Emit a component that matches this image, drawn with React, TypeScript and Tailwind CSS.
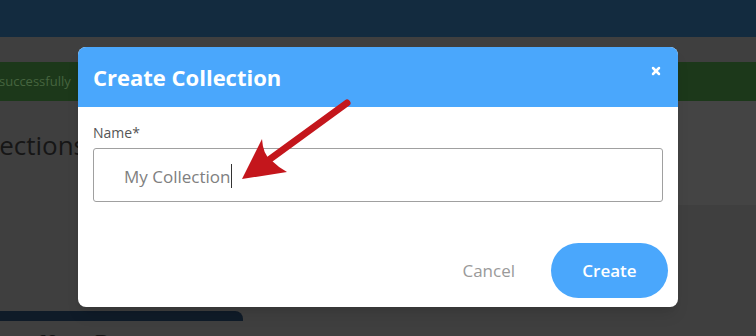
import { X } from "lucide-react"

export default function App() {
  return (
    <div className="relative h-[336px] w-[756px] overflow-hidden bg-[#3f3f3f] font-['Open_Sans',sans-serif]">
      {/* page behind the overlay */}
      <div className="h-[37px] bg-[#132b3f]" />
      <div className="mt-[25px] flex h-[39px] items-center bg-[#1c381a] text-[13px] text-[#46653f]">
        <span className="ml-[-1px]">successfully</span>
      </div>
      <div className="flex">
        <div className="flex-1">
          <h2 className="ml-[-46px] mt-[26px] text-[26px] leading-[36px] text-[#161616]">Collections</h2>
        </div>
        <div className="h-[104px] w-[78px] bg-[#444444]" />
      </div>
      <div className="mt-[106px] h-[10px] w-[243px] rounded-tr-[8px] bg-[#0f1b28]" />
      <div className="ml-[38px] mt-[7px] font-['Liberation_Serif',serif] text-[24px] italic leading-[28px] text-[#141414]">
        Nora Brown
      </div>

      {/* modal */}
      <div className="absolute left-[78px] top-[47px] flex h-[260px] w-[600px] flex-col overflow-hidden rounded-[8px] bg-white shadow-lg">
        <div className="flex h-[60px] items-center justify-between bg-[#4aa7fc] pl-[15px] pr-[16px]">
          <h1 className="text-[22px] font-bold leading-none text-white">Create Collection</h1>
          <X className="mt-[-12px] h-[12px] w-[12px] text-white" strokeWidth={5} />
        </div>
        <div className="px-[15px] pt-[16px]">
          <label className="block text-[14px] leading-[20px] text-[#555555]">Name*</label>
          <div className="mt-[5px] flex h-[54px] items-center rounded-[3px] border border-[#a0a0a0] pl-[30px] pt-[2px] text-[17px] leading-[23px] text-[#808080]">
            <span>My Collection</span>
            <span className="ml-[1px] inline-block h-[24px] w-px bg-[#333333]" />
          </div>
        </div>
        <div className="mt-auto flex items-center justify-end pb-[9px] pr-[10px]">
          <button className="mr-[36px] text-[17px] text-[#9a9a9a]">Cancel</button>
          <button className="h-[55px] w-[117px] rounded-full bg-[#4aa7fc] text-[17px] font-semibold text-white">
            Create
          </button>
        </div>
      </div>

      {/* red annotation arrow */}
      <svg className="pointer-events-none absolute left-0 top-0" width="756" height="336" viewBox="0 0 756 336">
        <line x1="347" y1="103" x2="266" y2="162" stroke="#c4161c" strokeWidth="7" strokeLinecap="round" />
        <path d="M242 179 L262 139 Q263 155 271 160 Q278 167 287 172 Z" fill="#c4161c" />
      </svg>
    </div>
  )
}
